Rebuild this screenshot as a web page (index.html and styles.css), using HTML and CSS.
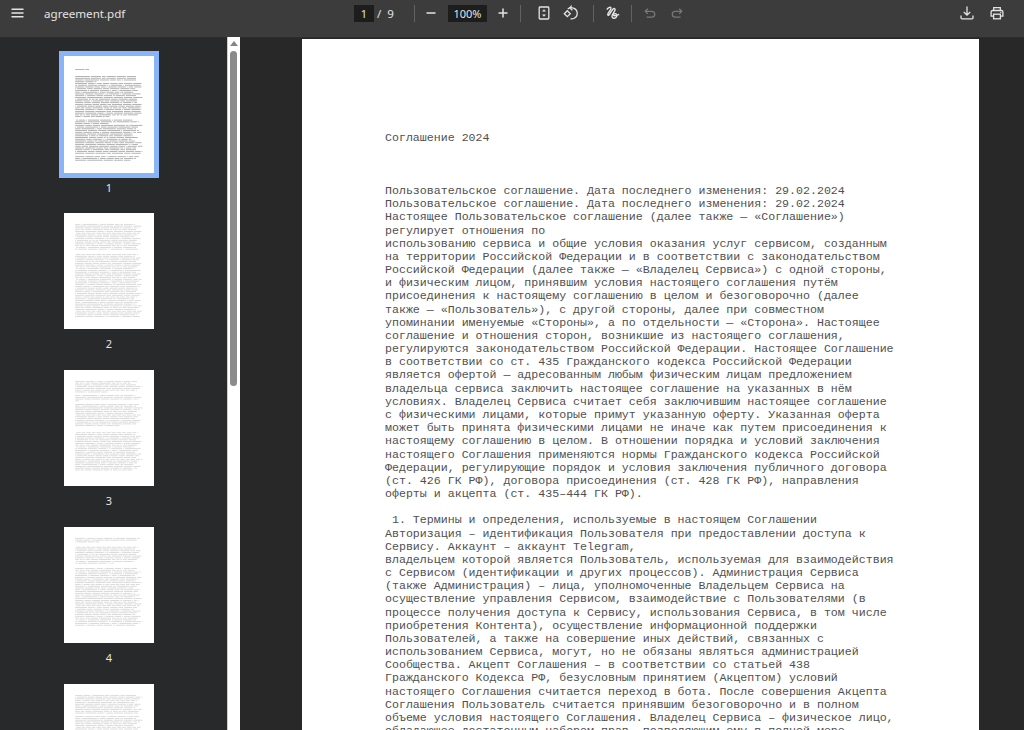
FILE: index.html
```
<!DOCTYPE html>
<html lang="ru">
<head>
    <meta charset="UTF-8">
    <meta name="viewport" content="width=device-width, initial-scale=1.0">
    <title>agreement.pdf</title>
    <link rel="stylesheet" href="styles.css">
</head>
<body>
    <div class="toolbar">
        <div class="toolbar-start">
            <svg class="icon" width="18" height="18" viewBox="0 0 18 18"><path d="M3.500 5.300h12M3.500 9h12M3.500 12.700h12" stroke-width="1.5"/></svg>
            <span class="file-name">agreement.pdf</span>
        </div>

        <div class="toolbar-center">
            <span class="field page-field">1</span>
            <span class="page-total">/&nbsp; 9</span>
            <span class="separator"></span>
            <svg class="icon zoom-out" width="18" height="18" viewBox="0 0 18 18"><path d="M4.5 9h9" stroke-width="1.5"/></svg>
            <span class="field zoom-field">100%</span>
            <svg class="icon zoom-in" width="18" height="18" viewBox="0 0 18 18"><path d="M4.5 9h9M9 4.5v9" stroke-width="1.5"/></svg>
            <span class="separator after-zoom"></span>
            <svg class="icon fit" width="18" height="18" viewBox="0 0 18 18">
                <rect x="4.2" y="3" width="9.6" height="12" rx="0.8"/>
                <path class="solid" d="M9 5.2l2 2.4H7zM9 12.8l2-2.4H7z"/>
            </svg>
            <svg class="icon rotate" width="18" height="18" viewBox="0 0 18 18">
                <path d="M5.300 6.700l3 3-3 3-3-3z"/>
                <path d="M5.800 4.900C7.500 3.600 10 3.500 11.500 4.100c4.600 1.700 5 7.800.8 10.100-1.200.7-2.500.8-3.800.6"/>
                <path d="M9.600 1.500L7.900 4l2.500 2.300"/>
            </svg>
            <span class="separator after-rotate"></span>
            <svg class="icon ink" width="18" height="18" viewBox="0 0 18 18">
                <path d="M2.800 5.500C4.500 3.300 6.900 2.500 7 4.300c.1 2.100-4.300 5-3.100 6.800C5.500 13 8 3.500 10.600 4.600c2.200 1.200-3.200 5.600-2.600 8 .6 2.600 4.300 2 4.900-.7.500-2.700-3.400-2.700-3.400-.9 0 1.200 3 .7 5.700-.6" stroke-width="1.4"/>
            </svg>
            <span class="separator after-ink"></span>
            <svg class="icon disabled undo" width="18" height="18" viewBox="0 0 18 18"><path d="M6.800 4.700L4.200 7.300l2.600 2.600M4.400 7.300h6.400a2.900 2.900 0 0 1 0 5.800H5.500"/></svg>
            <svg class="icon disabled redo" width="18" height="18" viewBox="0 0 18 18"><path d="M11.200 4.700l2.600 2.600-2.600 2.600M13.600 7.300H7.200a2.900 2.900 0 0 0 0 5.800h5.300"/></svg>
        </div>

        <div class="toolbar-end">
            <svg class="icon" width="18" height="18" viewBox="0 0 18 18"><path d="M9 2.500v8.500M5.800 8l3.200 3.200L12.200 8M3 11.500v2.300q0 1 1 1h10q1 0 1-1v-2.300"/></svg>
            <svg class="icon" width="18" height="18" viewBox="0 0 18 18">
                <path d="M5.700 6.500V3.700h6.600v2.800M5.500 12.200H3.100V8q0-1.500 1.500-1.500h8.800q1.500 0 1.500 1.500v4.200h-2.400"/>
                <rect x="5.600" y="10.200" width="6.800" height="4.600"/>
                <circle class="solid" cx="12.800" cy="8.400" r="0.700"/>
            </svg>
        </div>
    </div>

    <div class="viewer">
        <div class="sidebar">
            <div class="thumb selected"><svg class="sheet" viewBox="0 0 90 117"></svg><span>1</span></div>
            <div class="thumb"><svg class="sheet" viewBox="0 0 90 117"></svg><span>2</span></div>
            <div class="thumb"><svg class="sheet" viewBox="0 0 90 117"></svg><span>3</span></div>
            <div class="thumb"><svg class="sheet" viewBox="0 0 90 117"></svg><span>4</span></div>
            <div class="thumb"><svg class="sheet" viewBox="0 0 90 117"></svg></div>
        </div>

        <div class="scrollbar">
            <div class="scroll-arrow"></div>
            <div class="scroll-handle"></div>
        </div>

        <div class="document">
<div class="page" id="page">Соглашение 2024



Пользовательское соглашение. Дата последнего изменения: 29.02.2024
Пользовательское соглашение. Дата последнего изменения: 29.02.2024
Настоящее Пользовательское соглашение (далее также — «Соглашение»)
регулирует отношения по
использованию сервиса и общие условия оказания услуг сервисом, созданным
на территории Российской Федерации и в соответствии с законодательством
Российской Федерации (далее также — «Владелец Сервиса») с одной стороны,
и физическим лицом, принявшим условия настоящего соглашения путём
присоединения к настоящему соглашению в целом и безоговорочно (далее
также — «Пользователь»), с другой стороны, далее при совместном
упоминании именуемые «Стороны», а по отдельности — «Сторона». Настоящее
соглашение и отношения сторон, возникшие из настоящего соглашения,
регулируются законодательством Российской Федерации. Настоящее Соглашение
в соответствии со ст. 435 Гражданского кодекса Российской Федерации
является офертой — адресованным любым физическим лицам предложением
владельца сервиса заключить настоящее соглашение на указанных в нём
условиях. Владелец Сервиса считает себя заключившим настоящее соглашение
с физическими лицами, которые примут указанную оферту. Указанная оферта
может быть принята физическими лицами не иначе как путем присоединения к
настоящему соглашению в целом. В отношении порядка и условий заключения
настоящего Соглашения применяются нормы Гражданского кодекса Российской
Федерации, регулирующие порядок и условия заключения публичного договора
(ст. 426 ГК РФ), договора присоединения (ст. 428 ГК РФ), направления
оферты и акцепта (ст. 435–444 ГК РФ).

 1. Термины и определения, используемые в настоящем Соглашении
Авторизация – идентификация Пользователя при предоставлении доступа к
Сервису. Аккаунт – аккаунт Telegram,
владельцем которой является Пользователь, используемая для взаимодействия
с Сервисом (идентификации и других процессов). Администрация Сервиса
(также Администрация) – лица, уполномоченные Владельцем Сервиса на
осуществление управления Сервисом, взаимодействие с Пользователями (в
процессе получения доступа к Сервису, использования Сервиса, в том числе
приобретения Контента), осуществление информационной поддержки
Пользователей, а также на совершение иных действий, связанных с
использованием Сервиса, могут, но не обязаны являться администрацией
Сообщества. Акцепт Соглашения – в соответствии со статьей 438
Гражданского Кодекса РФ, безусловным принятием (Акцептом) условий
настоящего Соглашения считается переход в бота. После совершения Акцепта
Соглашения Пользователь считается принявшим безоговорочно и в полном
объеме условия настоящего Соглашения. Владелец Сервиса – физическое лицо,
обладающее достаточным набором прав, позволяющим ему в полной мере</div>
        </div>
    </div>

    <script src="script.js"></script>
</body>
</html>
```

FILE: styles.css
```
* {
    margin: 0;
    padding: 0;
    box-sizing: border-box;
}

body {
    height: 730px;
    overflow: hidden;
    background-color: #28292a;
    color: #e3e3e3;
    font-family: "Noto Sans", sans-serif;
    font-size: 12px;
}

.toolbar {
    display: flex;
    height: 38px;
    padding: 0 18px 11px 8px;
    align-items: center;
    background-color: #3c3c3c;
    border-bottom: 1px solid #2c2c2c;
}

.toolbar-start {
    display: flex;
    align-items: center;
    gap: 18px;
    width: 346px;
}

.file-name {
    font-size: 11.6px;
}

.toolbar-center {
    display: flex;
    align-items: center;
    flex: 1;
    font-size: 11px;
}

.toolbar-end {
    display: flex;
    gap: 12px;
}

.icon {
    flex-shrink: 0;
    fill: none;
    stroke: #e3e3e3;
    stroke-width: 1.3;
}

.icon .solid {
    fill: #e3e3e3;
    stroke: none;
}

.icon.disabled {
    stroke: #777;
}

.field {
    height: 17px;
    line-height: 17px;
    text-align: center;
    background-color: #1d1d1d;
}

.page-field {
    width: 20px;
}

.page-total {
    width: 40px;
    padding-left: 3px;
    font-size: 11.5px;
    white-space: nowrap;
}

.separator {
    width: 1px;
    height: 17px;
    background-color: #626262;
}

.zoom-out {
    margin-left: 7px;
}

.zoom-field {
    width: 39px;
    margin-left: 8px;
}

.zoom-in {
    margin-left: 7px;
}

.after-zoom {
    margin-left: 8px;
}

.fit {
    margin-left: 14px;
}

.rotate {
    margin-left: 9px;
}

.after-rotate {
    margin-left: 13px;
}

.ink {
    margin-left: 10px;
}

.after-ink {
    margin-left: 9px;
}

.undo {
    margin-left: 9px;
}

.redo {
    margin-left: 9px;
}

.viewer {
    display: flex;
    height: 692px;
}

.sidebar {
    width: 227px;
    padding: 18px 9px 0 0;
    overflow: hidden;
}

.thumb {
    display: flex;
    flex-direction: column;
    align-items: center;
    height: 156.9px;
    font-size: 11px;
    line-height: 15px;
}

.sheet {
    width: 90px;
    height: 116.5px;
    margin-bottom: 7px;
    background-color: #fff;
}

.selected .sheet {
    box-shadow: 0 0 0 5px #8ab4f8;
}

.scrollbar {
    display: flex;
    flex-direction: column;
    align-items: center;
    width: 13px;
    height: 693px;
    margin-top: -1px;
    padding-right: 1px;
    background-color: #fff;
    border-left: 1px solid #ccc;
}

.scroll-arrow {
    margin: 4px 0 5px;
    border: 4px solid transparent;
    border-top: 0;
    border-bottom: 5px solid #858585;
}

.scroll-handle {
    width: 7px;
    height: 335px;
    border-radius: 4px;
    background-color: #8b8b8b;
}

.document {
    flex: 1;
    padding: 1px 0 0 62px;
    overflow: hidden;
    background-color: #282828;
}

.page {
    width: 677px;
    height: 877px;
    padding: 92.4px 0 0 83px;
    background-color: #fff;
    color: #505050;
    font-family: "Liberation Mono", monospace;
    font-size: 11.61px;
    line-height: 13.17px;
    white-space: pre;
}
```

FILE: script.js
```
const SCALE = 90 / 677;
const page = document.getElementById('page');
const lines = page.textContent.split('\n');

// n full lines of text, the last one shorter
function block(start, n, last) {
    const out = [];
    for (let i = 0; i < n; i++) {
        const len = i === n - 1 ? last : 64 + (i * 7 + start) % 10;
        const from = 4 + (start * 5 + i * 3) % 23;
        out.push(lines[from + 4].padEnd(80, ' слово дело').slice(0, len));
    }
    return out;
}

const sheets = [
    lines.concat(block(2, 3, 72), [''], block(5, 3, 60)),
    block(1, 15, 68).concat([''], [''], block(4, 11, 66), block(7, 10, 68), block(2, 15, 70)),
    block(3, 2, 60).concat(block(2, 5, 35), [''], block(1, 4, 4), [''], block(5, 13, 48), ['', '', ''], block(4, 22, 62)),
    block(6, 3, 26).concat(['', ''], block(4, 10, 42), ['', ''], block(3, 16, 70), block(1, 17, 65)),
    block(2, 11, 68).concat([''], block(5, 30, 60))
];

document.querySelectorAll('.sheet').forEach((svg, n) => {
    const first = n === 0 ? 13.2 : 11;
    let markup = '';
    sheets[n].forEach((line, i) => {
        const y = first + (n === 0 ? i * 13.17 * SCALE : i * 1.78);
        for (const word of line.matchAll(/\S+/g)) {
            const x = 11 + word.index * 6.966 * SCALE;
            const w = word[0].length * 6.966 * SCALE;
            markup += `<rect x="${x.toFixed(2)}" y="${y.toFixed(2)}" width="${w.toFixed(2)}" height="0.8"/>`;
        }
    });
    svg.setAttribute('fill', n === 0 ? '#a2a2a2' : '#d2d2d2');
    svg.innerHTML = markup;
});
```
